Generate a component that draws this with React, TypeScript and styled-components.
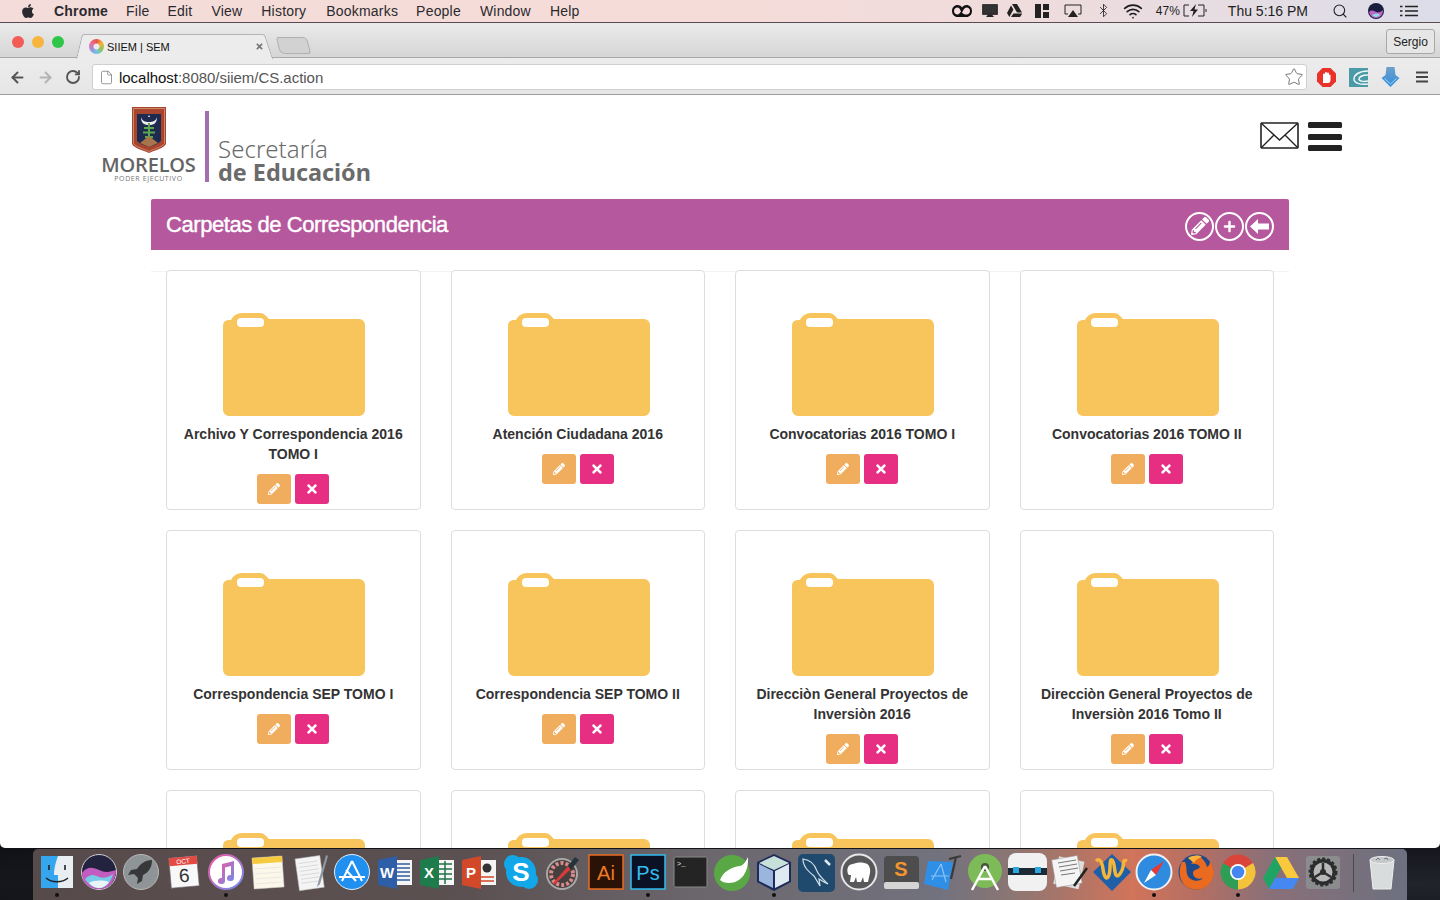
import React from "react"
import styled, { createGlobalStyle } from "styled-components"
import { FaApple, FaPencilAlt, FaTimes, FaPlus } from "react-icons/fa"
import { ArrowLeft, ArrowRight, RotateCw, Star, File, Search, Bluetooth, Wifi } from "lucide-react"

const GlobalStyle = createGlobalStyle`
  html, body { margin: 0; padding: 0; height: 900px; overflow: hidden; background: #14110f; }
  * { box-sizing: border-box; }
  body { font-family: "Liberation Sans", Arial, sans-serif; color: #333; }
`

const Screen = styled.div`
  width: 1440px;
  height: 900px;
  display: flex;
  flex-direction: column;
  overflow: hidden;
`

/* ---- mac menu bar ---- */
const MenuBar = styled.div`
  height: 23px;
  flex: none;
  display: flex;
  align-items: center;
  padding: 0 22px 1px 20px;
  background: linear-gradient(90deg, #f3dcd9 0%, #f6dcd8 45%, #f0dcdc 70%, #dcdde9 100%);
  border-bottom: 1px solid #5b4a50;
  font-size: 14px;
  color: #2a2a2e;
`
const MenuItem = styled.span<{ $ml: number; $bold?: boolean }>`
  margin-left: ${(p) => p.$ml}px;
  font-weight: ${(p) => (p.$bold ? 700 : 400)};
  letter-spacing: 0.2px;
  white-space: nowrap;
`
const Status = styled.div`
  margin-left: auto;
  display: flex;
  align-items: center;
  color: #1d1d22;
`
const StatusSlot = styled.span<{ $ml: number }>`
  margin-left: ${(p) => p.$ml}px;
  display: flex;
  align-items: center;
  white-space: nowrap;
`
const SmallText = styled.span`
  font-size: 12px;
`

/* ---- chrome ---- */
const TabStrip = styled.div`
  height: 35px;
  flex: none;
  display: flex;
  align-items: flex-end;
  padding: 0 5px 0 12px;
  background: linear-gradient(#ebebeb, #d5d5d5);
  border-bottom: 1px solid #a9a9a9;
`
const Lights = styled.div`
  display: flex;
  gap: 8px;
  align-self: flex-start;
  margin-top: 13px;
`
const Light = styled.span<{ $c: string }>`
  width: 12px;
  height: 12px;
  border-radius: 50%;
  background: ${(p) => p.$c};
`
const Tab = styled.div`
  position: relative;
  margin-left: 21px;
  margin-bottom: -1px;
  width: 178px;
  height: 24px;
  display: flex;
  align-items: center;
  background: #ececec;
  border-top: 1px solid #b5b5b5;
  font-size: 11px;
  color: #111;
  &::before,
  &::after {
    content: "";
    position: absolute;
    top: -1px;
    width: 12px;
    height: 24px;
    background: #ececec;
    border-top: 1px solid #b5b5b5;
  }
  &::before {
    left: -6px;
    transform: skewX(-13deg);
    border-left: 1px solid #a9a9a9;
    border-top-left-radius: 3px;
  }
  &::after {
    right: -6px;
    transform: skewX(18deg);
    border-right: 1px solid #a9a9a9;
    border-top-right-radius: 3px;
  }
`
const Favicon = styled.span`
  position: relative;
  z-index: 1;
  width: 15px;
  height: 15px;
  margin-left: 4px;
  margin-right: 3px;
  border-radius: 50%;
  background: radial-gradient(circle, #ececec 0 2.5px, transparent 3.5px),
    conic-gradient(#e8553f, #f3b23c, #8fc456, #6cc7e6, #a58be0, #e86fa0, #e8553f);
`
const TabTitle = styled.span`
  position: relative;
  z-index: 1;
  flex: 1;
`
const TabClose = styled.span`
  position: relative;
  z-index: 1;
  margin-right: -1px;
  display: flex;
  color: #777;
`
const NewTab = styled.div`
  width: 31px;
  height: 17px;
  margin-left: 15px;
  margin-bottom: 3px;
  border: 1px solid #b0b0b0;
  border-radius: 3px 4px 3px 5px;
  background: #d2d2d2;
  transform: skewX(14deg);
`
const Profile = styled.div`
  margin-left: auto;
  align-self: flex-start;
  margin-top: 6px;
  width: 49px;
  height: 25px;
  display: flex;
  align-items: center;
  justify-content: center;
  border: 1px solid #a8a8a8;
  border-radius: 3px;
  font-size: 12px;
  color: #222;
  background: #e6e6e6;
`
const Toolbar = styled.div`
  height: 37px;
  flex: none;
  display: flex;
  align-items: center;
  padding: 2px 0 0 9px;
  background: linear-gradient(#ececec, #e6e6e6);
  border-bottom: 1px solid #9c9c9c;
`
const NavButton = styled.span<{ $ml?: number; $off?: boolean }>`
  margin-left: ${(p) => p.$ml ?? 0}px;
  display: flex;
  color: ${(p) => (p.$off ? "#b4b4b4" : "#555")};
`
const Omnibox = styled.div`
  margin-left: 11px;
  width: 1215px;
  height: 26px;
  display: flex;
  align-items: center;
  padding: 0 2px 0 6px;
  background: #fff;
  border: 1px solid #cfcfcf;
  border-radius: 3px;
  font-size: 15px;
`
const UrlHost = styled.span`
  margin-left: 5px;
  letter-spacing: -0.03px;
  color: #111;
`
const UrlPath = styled.span`
  color: #555;
  letter-spacing: -0.03px;
  flex: 1;
`
const Extension = styled.span<{ $ml: number }>`
  margin-left: ${(p) => p.$ml}px;
  display: flex;
`

/* ---- page ---- */
const Page = styled.main`
  flex: 1;
  min-height: 0;
  overflow: hidden;
  background: #fff;
  border-radius: 0 0 5px 5px;
`
const Header = styled.header`
  height: 104px;
  display: flex;
  justify-content: space-between;
  padding: 12px 98px 0 102px;
`
const Logo = styled.div`
  display: flex;
`
const Crest = styled.div`
  width: 93px;
  display: flex;
  flex-direction: column;
  align-items: center;
`
const Morelos = styled.div`
  margin-top: 1px;
  font-family: "Open Sans", sans-serif;
  font-size: 20px;
  line-height: 21px;
  font-weight: 600;
  color: #646464;
  letter-spacing: -0.2px;
  white-space: nowrap;
`
const Poder = styled.div`
  font-family: "Open Sans", sans-serif;
  font-size: 7px;
  line-height: 8px;
  letter-spacing: 0.6px;
  color: #777;
  white-space: nowrap;
`
const LogoRule = styled.div`
  width: 4px;
  height: 71px;
  margin: 4px 9px 0 10px;
  background: #a26eae;
`
const LogoText = styled.div`
  padding-top: 29px;
  font-family: "Noto Sans", sans-serif;
  color: #6b6b6b;
`
const Sec = styled.div`
  font-size: 24px;
  line-height: 25px;
  font-weight: 300;
  letter-spacing: 0.1px;
`
const Edu = styled.div`
  font-size: 23.4px;
  line-height: 22px;
  font-weight: 700;
`
const HeaderIcons = styled.div`
  display: flex;
  gap: 9px;
  padding-top: 15px;
`
const Burger = styled.div`
  width: 34px;
  height: 29px;
  display: flex;
  flex-direction: column;
  justify-content: space-between;
`
const BurgerBar = styled.span`
  height: 6px;
  border-radius: 1.5px;
  background: #222;
`
const Wrap = styled.div`
  width: 1138px;
  margin: 0 auto;
`
const TitleBar = styled.div`
  height: 51px;
  display: flex;
  align-items: center;
  justify-content: space-between;
  padding: 0 15px;
  background: #b5589d;
  border-radius: 2px 2px 0 0;
`
const Title = styled.h1`
  margin: 0;
  font-size: 22px;
  font-weight: 400;
  letter-spacing: -0.43px;
  color: #fff;
  -webkit-text-stroke: 0.4px #fff;
`
const TitleActions = styled.div`
  display: flex;
  margin-top: 3px;
  gap: 1px;
`
const RoundAction = styled.span`
  width: 29px;
  height: 29px;
  display: flex;
  align-items: center;
  justify-content: center;
  border: 2px solid #fff;
  border-radius: 50%;
  color: #fff;
`
const Divider = styled.div`
  height: 1px;
  margin-top: 21px;
  margin-bottom: -2px;
  background: #f3f3f3;
`
const Grid = styled.div`
  display: grid;
  grid-template-columns: repeat(4, 1fr);
  row-gap: 20px;
`
const Col = styled.div`
  padding: 0 15px;
`
const Card = styled.article`
  height: 240px;
  padding: 42px 15px 0;
  display: flex;
  flex-direction: column;
  align-items: center;
  background: #fff;
  border: 1px solid #ddd;
  border-radius: 4px;
`
const FolderArt = styled.svg`
  margin-left: 2px;
  flex: none;
`
const CardTitle = styled.div`
  margin-top: 8px;
  font-size: 14px;
  line-height: 20px;
  font-weight: 700;
  text-align: center;
  color: #333;
`
const CardActions = styled.div`
  display: flex;
  gap: 4px;
  margin-top: 10px;
`
const ActionButton = styled.button<{ $bg: string }>`
  width: 34px;
  height: 30px;
  padding: 0;
  display: flex;
  align-items: center;
  justify-content: center;
  border: 0;
  border-radius: 3px;
  background: ${(p) => p.$bg};
  color: #fff;
  font-size: 12px;
`

/* ---- dock ---- */
const DockZone = styled.div`
  height: 52px;
  flex: none;
  padding: 1px 33px 0;
  background: radial-gradient(ellipse at 98% 70%, #22242c 0, #101116 100%);
`
const Dock = styled.nav`
  width: 1374px;
  height: 51px;
  display: flex;
  align-items: flex-start;
  padding: 3px 0 0 3px;
  border-radius: 5px 5px 0 0;
  background: linear-gradient(90deg, #574a4a 0%, #5c5152 32%, #6c686e 50%, #72727e 66%, #8a7674 71%, #d1745a 80%, #b26f64 85%, #8a7078 90%, #6d7080 100%);
`
const DockCell = styled.div<{ $running?: boolean }>`
  position: relative;
  width: 42.2px;
  height: 45px;
  flex: none;
  display: flex;
  justify-content: center;
  &::after {
    content: "";
    display: ${(p) => (p.$running ? "block" : "none")};
    position: absolute;
    left: 19px;
    bottom: 0;
    width: 4px;
    height: 4px;
    border-radius: 50%;
    background: #111;
  }
`
const DockDivider = styled.div`
  width: 1px;
  height: 38px;
  flex: none;
  margin: 2px 7px 0 9px;
  background: #4b4a52;
`

const Icon = ({ children }: { children: React.ReactNode }) => (
  <svg width="40" height="40" viewBox="0 0 40 40">
    {children}
  </svg>
)

const dockIcons: { key: string; running?: boolean; art: React.ReactNode }[] = [
  { key: "finder", running: true, art: (<>
    <rect x="4" y="4" width="32" height="32" fill="#e9eef2" />
    <path d="M4 4h17c-3 8-4 14-4 19h4v13H4z" fill="#35a5ee" />
    <path d="M12 13v5M28 13v5" stroke="#222" strokeWidth="1.6" />
    <path d="M9 26c6 5 16 5 22 0" stroke="#222" strokeWidth="1.4" fill="none" />
  </>) },
  { key: "siri", art: (<>
    <circle cx="20" cy="20" r="17.5" fill="#23233f" stroke="#cfcfd4" strokeWidth="1" />
    <path d="M3 21c5-7 11-6 17-3s11 2 17 0c0 11-7 19-17 19S3 31 3 21z" fill="#c35cc0" />
    <path d="M6 27c6-6 10-4 14-2s10 0 14-3c-2 9-8 14-14 14S9 32 6 27z" fill="#78cbe6" />
    <path d="M10 31c5-3 14-3 20-1-3 4-6 6-10 6s-7-2-10-5z" fill="#eaf5f7" />
  </>) },
  { key: "launchpad", art: (<>
    <circle cx="20" cy="20" r="17.5" fill="#8f9496" stroke="#b8b8b8" />
    <path d="M31 8c-7 0-12 4-15 9l-6 1-3 5 6-1 4 4-1 6 5-3 1-6c6-3 9-8 9-15z" fill="#37383a" />
  </>) },
  { key: "calendar", art: (<g transform="rotate(-5 20 20)">
    <rect x="6" y="5" width="28" height="30" fill="#f8f8f8" stroke="#666" strokeWidth=".6" />
    <rect x="6" y="5" width="28" height="8" fill="#e24a43" />
    <text x="20" y="11.500" textAnchor="middle" fontSize="6.500" fill="#fff" fontFamily="Liberation Sans">OCT</text>
    <text x="20" y="30" textAnchor="middle" fontSize="19" fill="#333" fontFamily="Liberation Sans">6</text>
  </g>) },
  { key: "itunes", running: true, art: (<>
    <defs>
      <linearGradient id="it" x1="0" y1="0" x2="1" y2="1">
        <stop offset="0" stopColor="#f0589a" />
        <stop offset="1" stopColor="#6f8df0" />
      </linearGradient>
    </defs>
    <circle cx="20" cy="20" r="17" fill="#fff" stroke="url(#it)" strokeWidth="2" />
    <path d="M16 12l12-3v17a3.500 3 0 1 1-3-3V14l-6 1.500V29a3.500 3 0 1 1-3-3z" fill="url(#it)" />
  </>) },
  { key: "notes", art: (<g transform="rotate(-4 20 20)">
    <rect x="5" y="5" width="30" height="31" fill="#fbf8ea" stroke="#ccc" strokeWidth=".5" />
    <rect x="5" y="5" width="30" height="6" fill="#f6ca3f" />
    <path d="M7 16h26M7 21h26M7 26h26M7 31h26" stroke="#ddd" strokeWidth=".6" />
  </g>) },
  { key: "textedit", art: (<>
    <g transform="rotate(-8 20 20)">
      <rect x="7" y="5" width="25" height="32" fill="#f4f4f4" stroke="#bbb" strokeWidth=".5" />
      <path d="M10 10h19M10 14h19M10 18h19M10 22h19M10 26h19M10 30h19" stroke="#c9c9c9" strokeWidth=".6" />
    </g>
    <path d="M36 3l-8 28-1 4 3-3 8-28z" fill="#8e98a2" />
  </>) },
  { key: "appstore", art: (<>
    <circle cx="20" cy="20" r="17.500" fill="#1f8ff0" stroke="#e5eef7" />
    <path d="M20 9L10 29M20 9l10 20M7 25h26M14 18l10 11" stroke="#fff" strokeWidth="2" fill="none" />
  </>) },
  { key: "word", art: (<>
    <rect x="20" y="8" width="17" height="25" fill="#f5f5f5" />
    <path d="M22 12h13M22 16h13M22 20h13M22 24h13M22 28h13" stroke="#2f5d9f" strokeWidth="1.600" />
    <path d="M3 8l19-4v33L3 33z" fill="#2e5ea8" />
    <text x="12" y="26" textAnchor="middle" fontSize="15" fontWeight="700" fill="#fff" fontFamily="Liberation Sans">W</text>
  </>) },
  { key: "excel", art: (<>
    <rect x="20" y="8" width="17" height="25" fill="#f5f5f5" />
    <path d="M22 12h13M22 17h13M22 22h13M22 27h13M28 9v23" stroke="#1f7246" strokeWidth="1.500" />
    <path d="M3 8l19-4v33L3 33z" fill="#1e7b4b" />
    <text x="12" y="26" textAnchor="middle" fontSize="15" fontWeight="700" fill="#fff" fontFamily="Liberation Sans">X</text>
  </>) },
  { key: "powerpoint", art: (<>
    <rect x="20" y="8" width="17" height="25" fill="#f5f5f5" />
    <circle cx="28" cy="16" r="4.500" fill="#333" />
    <path d="M22 25h13M22 29h13" stroke="#d2492a" strokeWidth="1.600" />
    <path d="M3 8l19-4v33L3 33z" fill="#d2492a" />
    <text x="12" y="26" textAnchor="middle" fontSize="15" fontWeight="700" fill="#fff" fontFamily="Liberation Sans">P</text>
  </>) },
  { key: "skype", art: (<>
    <circle cx="12" cy="12" r="9" fill="#12a7e8" />
    <circle cx="28" cy="28" r="9" fill="#12a7e8" />
    <circle cx="20" cy="20" r="15" fill="#12a7e8" />
    <text x="20" y="29" textAnchor="middle" fontSize="26" fontWeight="700" fill="#fff" fontFamily="Liberation Sans">S</text>
  </>) },
  { key: "colorpicker", art: (<>
    <circle cx="19" cy="22" r="15" fill="#44403f" stroke="#a8a8a8" strokeWidth="2" />
    <circle cx="19" cy="22" r="11" fill="none" stroke="#d98a8a" strokeWidth="4" strokeDasharray="3 2" />
    <path d="M10 31l16-18 3 3-18 17z" fill="#d93a3a" />
    <path d="M25 14l7-9 4 3-8 10z" fill="#26343c" />
  </>) },
  { key: "illustrator", art: (<>
    <rect x="3" y="3" width="34" height="34" fill="#2b1206" stroke="#e86c22" strokeWidth="1.500" />
    <text x="20" y="28" textAnchor="middle" fontSize="20" fill="#f07a23" fontFamily="Liberation Sans">Ai</text>
  </>) },
  { key: "photoshop", running: true, art: (<>
    <rect x="3" y="3" width="34" height="34" fill="#0b1226" stroke="#32bdf0" strokeWidth="1.500" />
    <text x="20" y="28" textAnchor="middle" fontSize="20" fill="#32bdf0" fontFamily="Liberation Sans">Ps</text>
  </>) },
  { key: "terminal", art: (<>
    <rect x="4" y="5" width="33" height="30" rx="1.500" fill="#242424" stroke="#8a8a8a" />
    <text x="7" y="14" fontSize="7" fill="#eee" fontFamily="Liberation Mono">&gt;_</text>
  </>) },
  { key: "spring", art: (<>
    <circle cx="20" cy="21" r="18" fill="#5aa845" />
    <path d="M36 5c1 15-7 26-19 26-4 0-7-1-9-3 3-8 11-13 20-14 4-1 6-5 8-9z" fill="#fff" />
  </>) },
  { key: "virtualbox", running: true, art: (<>
    <path d="M20 2l17 8v20l-17 9-17-9V10z" fill="#1e2a5a" />
    <path d="M20 4l15 7-15 7-15-7z" fill="#c8e0da" />
    <path d="M5 12l14 7v17L5 29z" fill="#9bb6dc" />
    <path d="M35 12l-14 7v17l14-7z" fill="#dfe9f2" />
  </>) },
  { key: "mysql", art: (<>
    <rect x="2" y="2" width="37" height="38" rx="5" fill="#1f4a6e" />
    <path d="M7 7c8 1 12 6 14 12 2 5 6 8 11 13-5-2-7-4-9-5l1 7-6-10C13 20 7 15 7 7z" fill="none" stroke="#cfe0ea" strokeWidth="1.200" />
    <path d="M29 8l5 5" stroke="#dfe9f2" strokeWidth="2.500" />
  </>) },
  { key: "mamp", art: (<>
    <circle cx="20" cy="20" r="17.500" fill="#58585a" stroke="#e6e6e6" strokeWidth="2" />
    <path d="M9 22c-2-6 1-10 5-10 2-1 8-2 11-1 4 0 7 4 6 10l-2 9h-4l-1-5-2 5h-4l-1-5-2 5h-4l1-7c-1 0-3 0-3-1z" fill="#fff" />
  </>) },
  { key: "sublime", art: (<>
    <rect x="3" y="4" width="35" height="33" rx="4" fill="#4d4d4d" />
    <rect x="3" y="30" width="35" height="7" rx="2" fill="#d5d5d5" />
    <text x="20" y="24" textAnchor="middle" fontSize="20" fontWeight="700" fill="#f2952e" fontFamily="Liberation Sans">S</text>
  </>) },
  { key: "xcode", art: (<>
    <path d="M5 9l25 1-5 28-24-6z" fill="#2f8fe6" />
    <path d="M9 28L18 12M18 12l5 18M8 24h18" stroke="#8cc4f4" strokeWidth="1.200" fill="none" />
    <path d="M26 7l12-3M33 5l-5 22" stroke="#3a3a3a" strokeWidth="2.200" />
  </>) },
  { key: "androidstudio", art: (<>
    <circle cx="20" cy="19" r="17" fill="#7dbb58" />
    <circle cx="20" cy="15" r="4" fill="#45543c" />
    <path d="M20 14L7 38M20 14l13 24M12 27h16" stroke="#fff" strokeWidth="2.500" fill="none" />
  </>) },
  { key: "scanner", art: (<>
    <rect x="1" y="1" width="39" height="38" rx="8" fill="#f1f1f1" />
    <rect x="1" y="16" width="39" height="7" fill="#1c2a36" />
    <rect x="6" y="15" width="6" height="6" fill="#2ca7df" />
    <rect x="28" y="15" width="6" height="6" fill="#2ca7df" />
  </>) },
  { key: "script", art: (<>
    <rect x="6" y="7" width="26" height="28" fill="#ddd" transform="rotate(12 20 20)" />
    <rect x="4" y="5" width="26" height="28" fill="#f4f4f4" stroke="#999" strokeWidth=".5" transform="rotate(-10 20 20)" />
    <path d="M8 11l18-3M9 15l18-3M10 19l18-3M11 23l14-2" stroke="#777" strokeWidth="1" />
    <path d="M37 16L24 34" stroke="#222" strokeWidth="2.500" />
  </>) },
  { key: "wunder", art: (<>
    <path d="M20 2l19 18-19 19L1 20z" fill="#1e5fa8" />
    <path d="M4 9c3-3 6 0 7 8s4 12 6 6 0-17 3-15 2 12 4 15 6-3 7-8 0-8 4-6" fill="none" stroke="#f4b63a" strokeWidth="3.500" />
  </>) },
  { key: "safari", running: true, art: (<>
    <circle cx="20" cy="20" r="17.500" fill="#2f8be0" stroke="#f0f0f0" strokeWidth="2" />
    <path d="M30 9L17 18l5 5z" fill="#e8382f" />
    <path d="M10 31l7-13 5 5z" fill="#fff" />
  </>) },
  { key: "firefox", art: (<>
    <circle cx="20" cy="20" r="17.500" fill="#1d4a8c" />
    <path d="M6 10c-5 10-2 24 10 27 11 3 21-5 22-16 0-5-2-9-4-12 0 3-1 5-3 6-1-5-5-10-11-12 1 5-3 6-5 9 3-1 8 0 9 3-2 3-7 2-7 6 0 5 6 7 10 5-4 5-14 3-16-4-1-4 0-8-2-12z" fill="#ea6a1f" />
    <path d="M12 6c5-3 11-3 14-1-4 1-7 3-8 6z" fill="#f6b43a" />
  </>) },
  { key: "chrome", running: true, art: (<>
    <path d="M20 20L5 11A17.500 17.500 0 0 1 35 11z" fill="#d9453a" />
    <path d="M20 20l15-9a17.500 17.500 0 0 1-15 26.500z" fill="#f5c33b" />
    <path d="M20 20v17.500A17.500 17.500 0 0 1 5 11z" fill="#2f9d55" />
    <circle cx="20" cy="20" r="8" fill="#fff" />
    <circle cx="20" cy="20" r="6.300" fill="#4586f3" />
  </>) },
  { key: "drive", art: (<>
    <path d="M14 5h12l12 21H26z" fill="#f8c93c" />
    <path d="M14 5L2 26l6 11 12-21z" fill="#1fa463" />
    <path d="M8 37l6-11h24l-6 11z" fill="#4688f1" />
  </>) },
  { key: "sysprefs", art: (<>
    <rect x="3" y="4" width="34" height="33" rx="3" fill="#8a8c8e" />
    <circle cx="20" cy="20" r="13" fill="#2d2d2d" stroke="#2d2d2d" strokeWidth="3" strokeDasharray="3 2" />
    <circle cx="20" cy="20" r="9.500" fill="#b8b8b8" />
    <path d="M20 20V11M20 20l-8 5M20 20l8 5" stroke="#2d2d2d" strokeWidth="2.500" />
    <circle cx="20" cy="20" r="3" fill="#2d2d2d" />
  </>) },
]

const folders = [
  "Archivo Y Correspondencia 2016 TOMO I",
  "Atención Ciudadana 2016",
  "Convocatorias 2016 TOMO I",
  "Convocatorias 2016 TOMO II",
  "Correspondencia SEP TOMO I",
  "Correspondencia SEP TOMO II",
  "Direcciòn General Proyectos de Inversiòn 2016",
  "Direcciòn General Proyectos de Inversiòn 2016 Tomo II",
  "",
  "",
  "",
  "",
]

const FolderIcon = () => (
  <FolderArt width="142" height="103" viewBox="0 0 142 103">
    <path
      d="M0 13a6 6 0 0 1 5-6h3c2-4 6-7 11-7h18c4 0 6 3 9 6h90a6 6 0 0 1 6 6v85a6 6 0 0 1-6 6H6a6 6 0 0 1-6-6z"
      fill="#f8c55c"
    />
    <rect x="14" y="5" width="27" height="9" rx="4" fill="#fff" />
  </FolderArt>
)

const Folder = ({ name }: { name: string }) => (
  <Col>
    <Card>
      <FolderIcon />
      <CardTitle>{name}</CardTitle>
      <CardActions>
        <ActionButton $bg="#f0ad5e">
          <FaPencilAlt />
        </ActionButton>
        <ActionButton $bg="#e62e83">
          <FaTimes size={14} />
        </ActionButton>
      </CardActions>
    </Card>
  </Col>
)

export default function App() {
  return (
    <Screen>
      <GlobalStyle />
      <MenuBar>
        <FaApple size={16} color="#2a2a2e" />
        <MenuItem $ml={18} $bold>Chrome</MenuItem>
        <MenuItem $ml={18}>File</MenuItem>
        <MenuItem $ml={18}>Edit</MenuItem>
        <MenuItem $ml={19}>View</MenuItem>
        <MenuItem $ml={19}>History</MenuItem>
        <MenuItem $ml={20}>Bookmarks</MenuItem>
        <MenuItem $ml={18}>People</MenuItem>
        <MenuItem $ml={19}>Window</MenuItem>
        <MenuItem $ml={19}>Help</MenuItem>
        <Status>
          <StatusSlot $ml={0}>
            <svg width="20" height="14" viewBox="0 0 20 14">
              <path d="M5.500 1C2.500 1 0 3.500 0 7s2.500 6 5.500 6h9c3 0 5.500-2.500 5.500-6s-2.500-6-5.500-6c-2 0-3.500 1-4.500 2.500C9.500 2 7.500 1 5.500 1z" fill="#111" />
              <path d="M5.500 3.500C3.500 3.500 2 5 2 7s1.500 3.500 3.500 3.500c1.500 0 2.500-1.500 3.500-3C8 5 7 3.500 5.500 3.500zM14.500 3.500c-2 0-3.500 3-4.500 5 1 1.500 2.500 2 4.500 2 2 0 3.500-1.500 3.500-3.500s-1.500-3.500-3.500-3.500z" fill="#f3dcda" />
            </svg>
          </StatusSlot>
          <StatusSlot $ml={10}>
            <svg width="16" height="14" viewBox="0 0 16 14">
              <rect x="0.700" y="0.700" width="14.600" height="9.600" fill="#333" stroke="#222" />
              <path d="M4 13h8l-2-2.500H6z" fill="#222" />
            </svg>
          </StatusSlot>
          <StatusSlot $ml={9}>
            <svg width="15" height="13" viewBox="0 0 15 13">
              <path d="M5 0h5l5 8.500h-5zM4 1.500L0 9l2.400 4 4-7.500zM4 13h9l2.400-3.500H6.400z" fill="#222" />
            </svg>
          </StatusSlot>
          <StatusSlot $ml={13}>
            <svg width="14" height="14" viewBox="0 0 14 14">
              <path d="M0 0h6v14H0zM8 0h6v6H8zM8 8h6v6H8z" fill="#222" />
            </svg>
          </StatusSlot>
          <StatusSlot $ml={15}>
            <svg width="18" height="14" viewBox="0 0 18 14">
              <path d="M4 10H1V1h16v9h-3" fill="none" stroke="#222" />
              <path d="M9 6l5 7H4z" fill="#222" />
            </svg>
          </StatusSlot>
          <StatusSlot $ml={14}>
            <Bluetooth size={15} strokeWidth={1.300} />
          </StatusSlot>
          <StatusSlot $ml={12}>
            <Wifi size={20} strokeWidth={2} />
          </StatusSlot>
          <StatusSlot $ml={13}>
            <SmallText>47%</SmallText>
          </StatusSlot>
          <StatusSlot $ml={3}>
            <svg width="24" height="13" viewBox="0 0 24 13">
              <path d="M6 1H1v11h5M15 1h6v11h-6M23 5v3" fill="none" stroke="#222" />
              <path d="M13 0L7 7h3.500L9 13l6-7.500h-3.500z" fill="#222" />
            </svg>
          </StatusSlot>
          <StatusSlot $ml={21}>Thu 5:16 PM</StatusSlot>
          <StatusSlot $ml={24}>
            <Search size={16} strokeWidth={1.600} />
          </StatusSlot>
          <StatusSlot $ml={20}>
            <svg width="16" height="16" viewBox="0 0 16 16">
              <circle cx="8" cy="8" r="8" fill="#1b1d40" />
              <path d="M1 9c3-3 5-1 7 0s5 0 7-2c0 5-3 8-7 8s-6-3-7-6z" fill="#c065c8" />
              <path d="M4 12c3-2 6-2 8 0-2 2.500-6 2.500-8 0z" fill="#8fdbe6" />
            </svg>
          </StatusSlot>
          <StatusSlot $ml={16}>
            <svg width="18" height="12" viewBox="0 0 18 12">
              <path d="M5 1.500h13M5 6h13M5 10.500h13" stroke="#222" strokeWidth="1.500" />
              <path d="M0 1.500h2.500M0 6h2.500M0 10.500h2.500" stroke="#222" strokeWidth="1.500" />
            </svg>
          </StatusSlot>
        </Status>
      </MenuBar>

      <TabStrip>
        <Lights>
          <Light $c="#f25c56" />
          <Light $c="#f8b53e" />
          <Light $c="#2ec648" />
        </Lights>
        <Tab>
          <Favicon />
          <TabTitle>SIIEM | SEM</TabTitle>
          <TabClose><FaTimes size={9} /></TabClose>
        </Tab>
        <NewTab />
        <Profile>Sergio</Profile>
      </TabStrip>

      <Toolbar>
        <NavButton><ArrowLeft size={17} strokeWidth={2.800} /></NavButton>
        <NavButton $ml={11} $off><ArrowRight size={17} strokeWidth={2.800} /></NavButton>
        <NavButton $ml={11}><RotateCw size={16} strokeWidth={2.800} /></NavButton>
        <Omnibox>
          <File size={15} color="#777" strokeWidth={1.200} />
          <UrlHost>localhost</UrlHost>
          <UrlPath>:8080/siiem/CS.action</UrlPath>
          <Star size={20} color="#777" strokeWidth={1.200} />
        </Omnibox>
        <Extension $ml={10}>
          <svg width="19" height="19" viewBox="0 0 19 19">
            <path d="M5.500 0h8L19 5.500v8L13.500 19h-8L0 13.500v-8z" fill="#e8322a" />
            <path d="M6 15V6.500a1 1 0 0 1 2 0V5a1 1 0 0 1 2 0v.5a1 1 0 0 1 2 0V7a1 1 0 0 1 1.500 0v5c0 2-1 3-2.500 3z" fill="#fff" />
          </svg>
        </Extension>
        <Extension $ml={13}>
          <svg width="19" height="19" viewBox="0 0 19 19">
            <rect width="19" height="19" fill="#4b9aa8" />
            <path d="M19 3C10 3 5 7 5 11s6 6 14 5M19 7c-6 0-9 2-9 4s4 3 9 2" fill="none" stroke="#eef6f7" strokeWidth="1.500" />
          </svg>
        </Extension>
        <Extension $ml={13}>
          <svg width="19" height="20" viewBox="0 0 19 20">
            <defs>
              <linearGradient id="dl" x1="0" y1="0" x2="0" y2="1">
                <stop offset="0" stopColor="#6f9fc9" />
                <stop offset="1" stopColor="#2f8fe0" />
              </linearGradient>
            </defs>
            <path d="M5.500 0h8l1 8 4 3-9 9-9-9 4-3z" fill="url(#dl)" />
            <path d="M3.500 11.500l6 5.500 6-5.500" fill="none" stroke="#a9d1f0" strokeWidth="1" />
          </svg>
        </Extension>
        <Extension $ml={16}>
          <svg width="12" height="12" viewBox="0 0 12 12">
            <path d="M0 1.500h12M0 6h12M0 10.500h12" stroke="#444" strokeWidth="2" />
          </svg>
        </Extension>
      </Toolbar>

      <Page>
        <Header>
          <Logo>
            <Crest>
              <svg width="34" height="46" viewBox="0 0 34 46">
                <path d="M0 0h34v37c-3 5-11 6-17 9C11 43 3 42 0 37z" fill="#a9452f" />
                <path d="M1.500 1.500h31v35c-3 4-10 5-15.500 8-5.500-3-12.500-4-15.500-8z" fill="none" stroke="#c98a6a" strokeWidth="1" />
                <path d="M5 7h24v27c-3 3-7 4-12 6-5-2-9-3-12-6z" fill="#1e2a50" />
                <path d="M9 10c0 7 4 8 8 8s8-1 8-8c-1 4-4 5-8 5s-7-1-8-5z" fill="#eee" />
                <path d="M17 8l1 2h-2z" fill="#fff" />
                <path d="M17 16v19M12 21h10M11 25.500h12M13 30h8" stroke="#5aa84a" strokeWidth="2" />
                <path d="M8 36l9-7 9 7-9 4z" fill="#a8744a" />
              </svg>
              <Morelos>MORELOS</Morelos>
              <Poder>PODER EJECUTIVO</Poder>
            </Crest>
            <LogoRule />
            <LogoText>
              <Sec>Secretaría</Sec>
              <Edu>de Educación</Edu>
            </LogoText>
          </Logo>
          <HeaderIcons>
            <svg width="39" height="27" viewBox="0 0 39 27">
              <rect x="1" y="1" width="37" height="25" rx="1" fill="#fff" stroke="#222" strokeWidth="1.600" />
              <path d="M1 1l18.500 17L38 1M1 26l13-13M38 26L25 13" fill="none" stroke="#222" strokeWidth="1.400" />
            </svg>
            <Burger>
              <BurgerBar />
              <BurgerBar />
              <BurgerBar />
            </Burger>
          </HeaderIcons>
        </Header>
        <Wrap>
          <TitleBar>
            <Title>Carpetas de Correspondencia</Title>
            <TitleActions>
              <RoundAction><FaPencilAlt size={18} /></RoundAction>
              <RoundAction><FaPlus size={13} /></RoundAction>
              <RoundAction>
                <svg width="19" height="15" viewBox="0 0 19 15">
                  <path d="M0 7.500L8 0v4.500h11v6H8V15z" fill="#fff" />
                </svg>
              </RoundAction>
            </TitleActions>
          </TitleBar>
          <Divider />
          <Grid>
            {folders.map((name, i) => (
              <Folder key={i} name={name} />
            ))}
          </Grid>
        </Wrap>
      </Page>

      <DockZone>
        <Dock>
          {dockIcons.map((d) => (
            <DockCell key={d.key} $running={d.running}>
              <Icon>{d.art}</Icon>
            </DockCell>
          ))}
          <DockDivider />
          <DockCell>
            <Icon>
              <path d="M8 8h24l-3 29H11z" fill="#d8dcdc" stroke="#eee" />
              <ellipse cx="20" cy="8" rx="12" ry="3.500" fill="#c4c8c8" stroke="#eee" />
              <path d="M14 8l2-2 2 2M22 7l3-1 1 2" stroke="#6a7a80" fill="none" />
            </Icon>
          </DockCell>
        </Dock>
      </DockZone>
    </Screen>
  )
}
